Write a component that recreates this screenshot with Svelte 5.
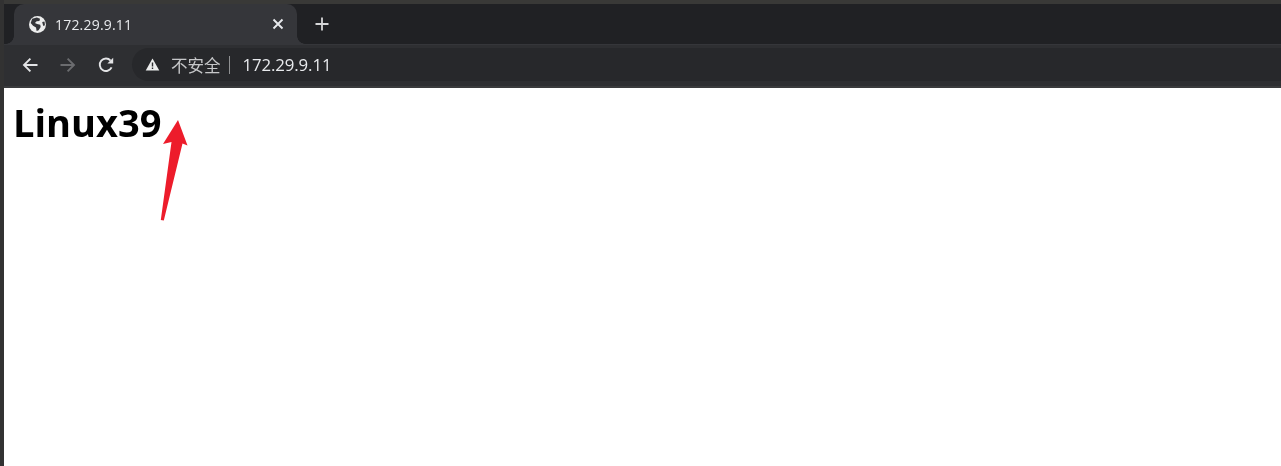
<script>
    const host = "172.29.9.11";
</script>

<div class="shot">
    <div class="edge"></div>
    <div class="window">
        <div class="tabbar">
            <div class="tab">
                <svg class="globe" viewBox="0 0 16 16" width="17" height="17">
                    <circle cx="8" cy="8" r="8" fill="#eceded" />
                    <path d="M3 2.6 7.4 1.5 10.4 2.5 9.8 4.6 7.2 4.9 5.6 6.6 7.6 7.5 10.6 8.2 11 10.3 9 13.4 7.2 14 6.6 10.8 3.8 9.2 1.6 6.6Z" fill="#35363a" />
                    <path d="M12.4 5.6 14.6 5.2 15 8.6 13.4 9.4Z" fill="#35363a" />
                </svg>
                <span class="title">{host}</span>
                <svg class="close" viewBox="0 0 12 12" width="12" height="12">
                    <path d="M1.5 1.5 10.5 10.5M10.5 1.5 1.5 10.5" stroke="#e8eaed" stroke-width="1.9" />
                </svg>
            </div>
            <svg class="plus" viewBox="0 0 14 14" width="14" height="14">
                <path d="M7 0.5V13.5M0.5 7H13.5" stroke="#d5d6d8" stroke-width="1.8" />
            </svg>
        </div>
        <div class="toolbar">
            <svg class="nav" viewBox="0 0 16 16" width="16" height="16">
                <path d="M15.5 8H2M8.4 1.6 2 8 8.4 14.4" fill="none" stroke="#e3e4e6" stroke-width="1.9" />
            </svg>
            <svg class="nav" viewBox="0 0 16 16" width="16" height="16">
                <path d="M0.5 8H14M7.6 1.6 14 8 7.6 14.4" fill="none" stroke="#6b6c6f" stroke-width="1.9" />
            </svg>
            <svg class="nav" viewBox="0 0 16 16" width="16" height="16">
                <path d="M13.6 10.4A6.2 6.2 0 1 1 12.6 3.6" fill="none" stroke="#e3e4e6" stroke-width="1.9" />
                <path d="M15.2 0.8V6.6H9.4Z" fill="#e3e4e6" />
            </svg>
            <div class="omnibox">
                <svg class="warn" viewBox="0 0 14 13" width="15" height="13">
                    <path d="M7 0.5 13.8 12.5H0.2Z" fill="#eceded" />
                    <path d="M6.3 4.6H7.7V8.6H6.3ZM6.3 9.6H7.7V11H6.3Z" fill="#2b2c2f" />
                </svg>
                <span class="insecure">不安全</span>
                <span class="sep"></span>
                <span class="url">{host}</span>
            </div>
        </div>
        <div class="page">
            <h1>Linux39</h1>
        </div>
    </div>
    <svg class="arrow" viewBox="0 0 30 102" width="30" height="102">
        <path d="M18 0 27.5 25.5 22.5 23.5 3.8 100.5 0.8 100 11.5 22 3 24Z" fill="#ed1c2b" />
    </svg>
</div>

<style>
    :global(body) {
        margin: 0;
        background: #fff;
    }
    .shot {
        position: relative;
        display: flex;
        width: 1281px;
        height: 466px;
        overflow: hidden;
        font-family: "Open Sans", "Noto Sans CJK SC", sans-serif;
        filter: blur(0.35px);
    }
    .edge {
        width: 4px;
        flex: none;
        background: #323232;
    }
    .window {
        flex: 1;
        display: flex;
        flex-direction: column;
        border-top: 4px solid #393937;
    }
    .tabbar {
        height: 40px;
        flex: none;
        display: flex;
        align-items: center;
        background: #202124;
        padding-left: 10px;
    }
    .tab {
        position: relative;
        width: 283px;
        height: 40px;
        box-sizing: border-box;
        display: flex;
        align-items: center;
        padding: 0 13px 0 15px;
        background: #35363a;
        border-radius: 10px 10px 0 0;
    }
    /* concave corners where the tab meets the toolbar */
    .tab::before,
    .tab::after {
        content: "";
        position: absolute;
        bottom: 0;
        width: 8px;
        height: 8px;
    }
    .tab::before {
        left: -8px;
        background: radial-gradient(circle at 0 0, #202124 7.5px, #35363a 8px);
    }
    .tab::after {
        right: -8px;
        background: radial-gradient(circle at 100% 0, #202124 7.5px, #35363a 8px);
    }
    .globe {
        flex: none;
    }
    .title {
        margin-left: 9px;
        flex: 1;
        color: #e8eaed;
        font-size: 14px;
        letter-spacing: 0.2px;
    }
    .plus {
        margin-left: 18px;
    }
    .toolbar {
        height: 44px;
        flex: none;
        box-sizing: border-box;
        display: flex;
        align-items: center;
        padding: 0 0 2px 18px;
        gap: 22px;
        background: #2e2f32;
        border-top: 1px solid #35363a;
        border-bottom: 2px solid #3a3b3d;
    }
    .omnibox {
        height: 33px;
        flex: 1;
        margin-left: -4px;
        display: flex;
        align-items: center;
        padding-left: 13px;
        background: #27282b;
        border-radius: 17px 0 0 17px;
    }
    .warn {
        flex: none;
    }
    .insecure {
        margin-left: 11px;
        color: #c6c7c9;
        font-size: 16.5px;
        font-family: "Noto Sans CJK SC", sans-serif;
    }
    .sep {
        width: 1px;
        height: 18px;
        margin: 0 13px 0 8px;
        background: #8f9092;
    }
    .url {
        color: #e8eaed;
        font-size: 16.8px;
        letter-spacing: -0.1px;
    }
    .page {
        flex: 1;
        background: #fff;
        padding: 12px 10px;
    }
    h1 {
        margin: 0 0 0 -1px;
        color: #000;
        font-size: 38px;
        line-height: 44px;
        font-weight: 700;
    }
    .arrow {
        position: absolute;
        left: 160px;
        top: 120px;
    }
</style>
